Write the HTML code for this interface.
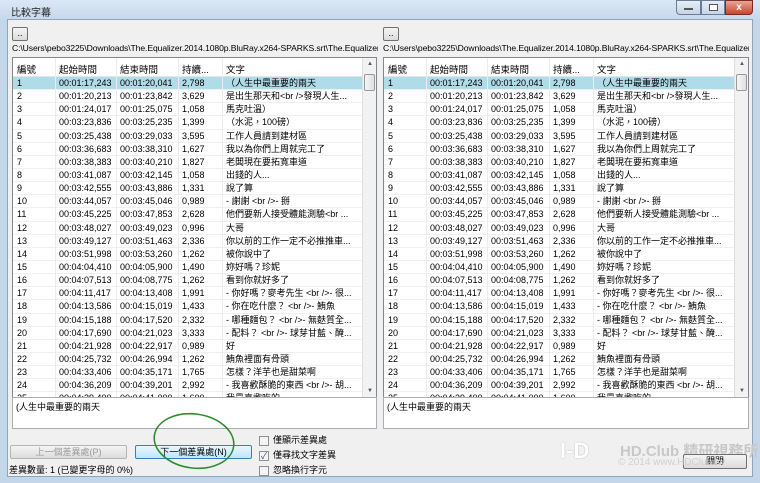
<!DOCTYPE html>
<html><head><meta charset="utf-8"><style>
*{margin:0;padding:0;box-sizing:border-box}
body{width:760px;height:483px;overflow:hidden;background:#c3d6ea;font-family:"Liberation Sans","Noto Sans CJK TC",sans-serif;font-size:9px;color:#000;position:relative}
.abs{position:absolute}
.title{left:0;top:0;width:760px;height:20px;background:linear-gradient(#dbe7f4,#c6d8ec)}
.client{left:7px;top:19px;width:746px;height:458px;background:#f0f0f0;border:1px solid #8ea5c0}
.btn{border:1px solid #707070;border-radius:2px;background:linear-gradient(#f4f4f4,#dcdcdc);text-align:center}
.grid{background:#fff;border:1px solid #828790;overflow:hidden}
.hdr{height:19px;border-bottom:1px solid #e5e5e5;position:relative;background:#fff}
.hdr span,.row span{position:absolute;white-space:nowrap;overflow:hidden}
.hdr span{top:4px;font-size:9.5px}
.row{height:13.15px;position:relative;border-bottom:1px solid #f0f0f0}
.row span{top:1px;line-height:11px;font-size:9px}
.sel{background:#b0dbe8}
.cl{position:absolute;top:0;bottom:0;width:1px;background:#ececec}
.sb{position:absolute;right:0;top:0;width:14px;bottom:0;background:#f2f2f2;border-left:1px solid #e0e0e0}
.txt{background:#fff;border:1px solid #abadb3;font-size:9px;padding:2px 3px}
.cb{width:10px;height:10px;border:1px solid #8e8f8f;background:#f4f4f4;display:inline-block;vertical-align:middle;margin-right:4px;font-size:9px;line-height:8px;text-align:center;color:#2a4d8a}
</style></head><body>
<div class="abs title"></div>
<div class="abs" style="left:11px;top:4px;font-size:10px;color:#222">比較字幕</div>
<div class="abs" style="left:676px;top:0;width:25px;height:15px;border:1px solid #6d7c95;border-radius:0 0 0 4px;background:linear-gradient(#e5eef8,#c6d4e6)"><div style="margin:7px 7px;width:9px;height:2px;background:#fff;border:1px solid #555"></div></div>
<div class="abs" style="left:701px;top:0;width:24px;height:15px;border:1px solid #6d7c95;background:linear-gradient(#e5eef8,#c6d4e6)"><div style="margin:3px 7px;width:9px;height:7px;border:1px solid #555;background:#fff"></div></div>
<div class="abs" style="left:725px;top:0;width:28px;height:15px;border:1px solid #7a2b22;border-radius:0 0 4px 0;background:linear-gradient(#e8a595,#c9452e);color:#fff;font-weight:bold;text-align:center;font-size:10px;line-height:13px">x</div>
<div class="abs client"></div>

<div class="abs btn" style="left:12px;top:27px;width:16px;height:14px;line-height:10px">..</div>
<div class="abs btn" style="left:383px;top:27px;width:16px;height:14px;line-height:10px">..</div>
<div class="abs" style="left:12px;top:43px;width:366px;overflow:hidden;white-space:nowrap;font-size:8.6px;letter-spacing:-0.1px">C:\Users\pebo3225\Downloads\The.Equalizer.2014.1080p.BluRay.x264-SPARKS.srt\The.Equalizer..</div>
<div class="abs" style="left:383px;top:43px;width:366px;overflow:hidden;white-space:nowrap;font-size:8.6px;letter-spacing:-0.1px">C:\Users\pebo3225\Downloads\The.Equalizer.2014.1080p.BluRay.x264-SPARKS.srt\The.Equalizer..</div>

<div id="L" class="abs grid" style="left:12px;top:57px;width:365px;height:341px"></div>
<div id="R" class="abs grid" style="left:383px;top:57px;width:366px;height:341px"></div>

<div class="abs txt" style="left:12px;top:397px;width:365px;height:32px">(人生中最重要的兩天</div>
<div class="abs txt" style="left:383px;top:397px;width:366px;height:32px">(人生中最重要的兩天</div>

<div class="abs btn" style="left:10px;top:445px;width:117px;height:14px;color:#9a9a9a;border-color:#b5b5b5;line-height:12px">上一個差異處(P)</div>
<div class="abs btn" style="left:135px;top:445px;width:117px;height:14px;line-height:12px;border-color:#3c7fb1;background:linear-gradient(#eaf6fd,#bee6fd)">下一個差異處(N)</div>
<div class="abs" style="left:9px;top:463px;font-size:9px">差異數量: 1 (已變更字母的 0%)</div>
<svg class="abs" style="left:150px;top:410px" width="90" height="62"><ellipse cx="44" cy="31" rx="40" ry="27" fill="none" stroke="#2e8b2e" stroke-width="1.6" transform="rotate(8 44 31)"/></svg>
<div class="abs" style="left:259px;top:433px;font-size:9px;line-height:15px">
<div><span class="cb"></span>僅顯示差異處</div>
<div><span class="cb">✓</span>僅尋找文字差異</div>
<div><span class="cb"></span>忽略換行字元</div></div>

<div class="abs" style="left:560px;top:440px;width:45px;height:26px;color:#fff;font-weight:bold;font-size:22px;line-height:22px;text-shadow:0 0 1px #888">I-D</div>
<div class="abs" style="left:620px;top:440px;color:#c8c8c8;font-size:15px;font-weight:bold;white-space:nowrap">HD.Club 精研視務所</div>
<div class="abs btn" style="left:683px;top:454px;width:64px;height:15px;line-height:13px">關閉</div>
<div class="abs" style="left:618px;top:457px;color:#d0d0d0;font-size:10px;white-space:nowrap">© 2014 www.HDClub.tw</div>

<script>
const d=[["00:01:17,243","00:01:20,041","2,798","（人生中最重要的兩天"],["00:01:20,213","00:01:23,842","3,629","是出生那天和<br />發現人生..."],["00:01:24,017","00:01:25,075","1,058","馬克吐溫）"],["00:03:23,836","00:03:25,235","1,399","（水泥，100磅）"],["00:03:25,438","00:03:29,033","3,595","工作人員請到建材區"],["00:03:36,683","00:03:38,310","1,627","我以為你們上周就完工了"],["00:03:38,383","00:03:40,210","1,827","老闆現在要拓寬車道"],["00:03:41,087","00:03:42,145","1,058","出錢的人..."],["00:03:42,555","00:03:43,886","1,331","說了算"],["00:03:44,057","00:03:45,046","0,989","- 謝謝 <br />- 掰"],["00:03:45,225","00:03:47,853","2,628","他們要新人接受體能測驗<br ..."],["00:03:48,027","00:03:49,023","0,996","大哥"],["00:03:49,127","00:03:51,463","2,336","你以前的工作一定不必推推車..."],["00:03:51,998","00:03:53,260","1,262","被你說中了"],["00:04:04,410","00:04:05,900","1,490","妳好嗎？珍妮"],["00:04:07,513","00:04:08,775","1,262","看到你就好多了"],["00:04:11,417","00:04:13,408","1,991","- 你好嗎？麥考先生 <br />- 很..."],["00:04:13,586","00:04:15,019","1,433","- 你在吃什麼？ <br />- 鮪魚"],["00:04:15,188","00:04:17,520","2,332","- 哪種麵包？ <br />- 無麩質全..."],["00:04:17,690","00:04:21,023","3,333","- 配料？ <br />- 球芽甘藍、醃..."],["00:04:21,928","00:04:22,917","0,989","好"],["00:04:25,732","00:04:26,994","1,262","鮪魚裡面有骨頭"],["00:04:33,406","00:04:35,171","1,765","怎樣？洋芋也是甜菜啊"],["00:04:36,209","00:04:39,201","2,992","- 我喜歡酥脆的東西 <br />- 胡..."],["00:04:39,400","00:04:41,000","1,600","我最喜歡吃的..."]];
const xs=[3,45,106,168,212];const cw=[40,60,60,42,136];
function build(el){let h='<div class="hdr">';["編號","起始時間","結束時間","持續...","文字"].forEach((t,i)=>h+=`<span style="left:${xs[i]+1}px;width:${cw[i]}px">${t}</span>`);h+='</div>';
d.forEach((r,k)=>{h+=`<div class="row${k==0?' sel':''}">`;[String(k+1)].concat(r).forEach((t,i)=>h+=`<span style="left:${xs[i]+1}px;width:${cw[i]}px">${t.replace(/</g,'&lt;')}</span>`);h+='</div>';});
[42,103,165,209].forEach(x=>h+=`<div class="cl" style="left:${x}px"></div>`);
h+='<div class="sb"><div style="position:absolute;top:3px;left:4px;font-size:6px;color:#555">▲</div><div style="position:absolute;top:16px;left:1px;width:11px;height:17px;border:1px solid #999;border-radius:2px;background:linear-gradient(90deg,#f6f6f6,#e0e0e0)"></div><div style="position:absolute;bottom:3px;left:4px;font-size:6px;color:#555">▼</div></div>';
el.innerHTML=h;}
build(document.getElementById('L'));build(document.getElementById('R'));
</script>
</body></html>
